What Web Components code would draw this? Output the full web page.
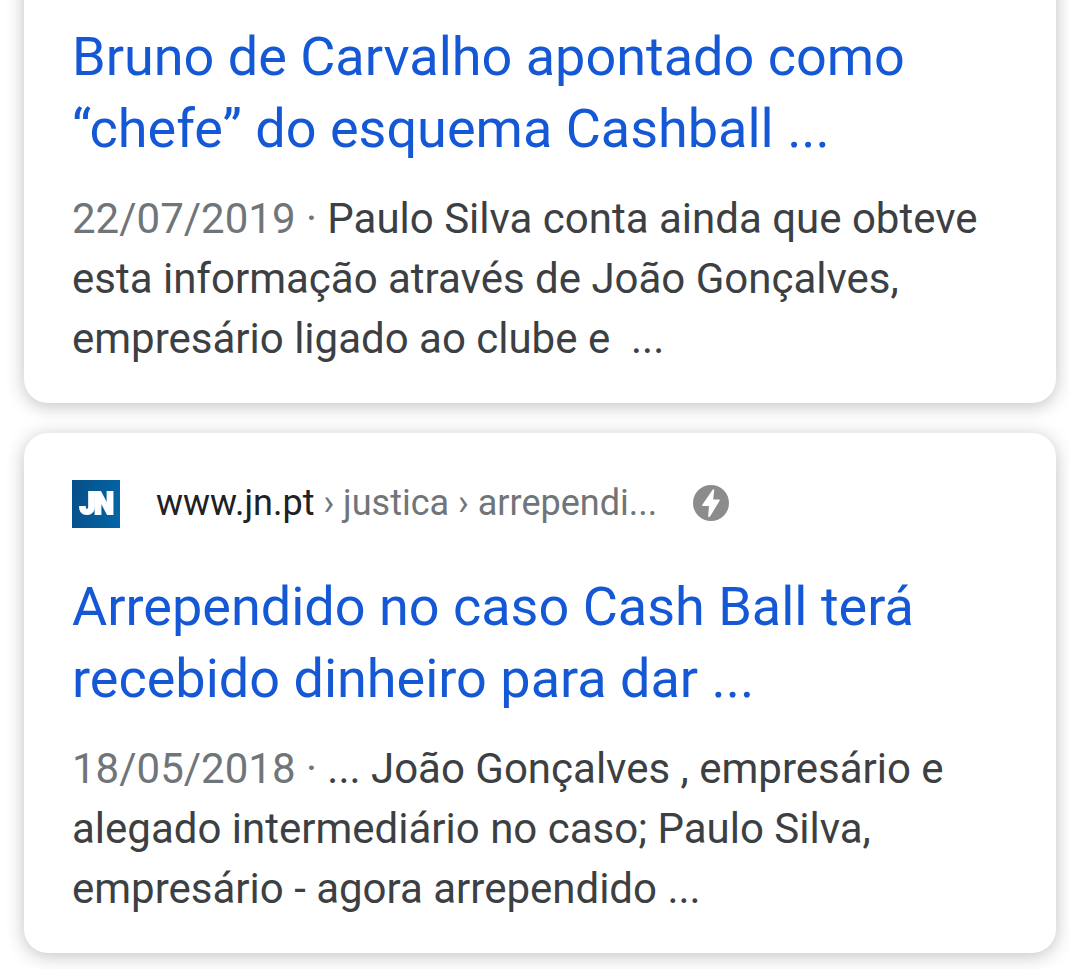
<!DOCTYPE html>
<html lang="pt">
<head>
<meta charset="utf-8">
<title>Resultados</title>
<style>
  html, body { margin: 0; height: 969px; overflow: hidden; background: #fff; }
  body { font-family: Roboto, "Liberation Sans", sans-serif; }
</style>
</head>
<body>
<result-list>
  <result-card class="first">
    <result-title>Bruno de Carvalho apontado como<br>“chefe” do esquema Cashball ...</result-title>
    <result-snippet date="22/07/2019">Paulo Silva conta ainda que obteve<br>esta informação através de João Gonçalves,<br>empresário ligado ao clube e &nbsp;...</result-snippet>
  </result-card>
  <result-card>
    <result-source slot="source" host="www.jn.pt" path=" › justica › arrependi..."></result-source>
    <result-title>Arrependido no caso Cash Ball terá<br>recebido dinheiro para dar ...</result-title>
    <result-snippet date="18/05/2018">... João Gonçalves , empresário e<br>alegado intermediário no caso; Paulo Silva,<br>empresário - agora arrependido ...</result-snippet>
  </result-card>
</result-list>

<script>
/* Attaches an open shadow root filled from a template. */
function define(name, html, setup) {
  const template = document.createElement('template');
  template.innerHTML = html;
  customElements.define(name, class extends HTMLElement {
    constructor() {
      super();
      this.attachShadow({ mode: 'open' }).appendChild(template.content.cloneNode(true));
    }
    connectedCallback() {
      if (setup) setup(this, this.shadowRoot);
    }
  });
}

define('result-list', `
  <style>
    :host {
      display: flex;
      flex-direction: column;
      gap: 30px;
      height: 969px;
      padding: 0 13px 0 24px;
      box-sizing: border-box;
      overflow: hidden;
    }
    ::slotted(result-card) { flex: none; }
    ::slotted(.first) { margin-top: -117px; }
  </style>
  <slot></slot>
`);

define('result-card', `
  <style>
    :host {
      display: flex;
      flex-direction: column;
      height: 520px;
      padding: 0 48px;
      box-sizing: border-box;
      border-radius: 24px;
      background: #fff;
      box-shadow: 0 3px 18px rgba(32, 33, 36, .28);
    }
    .source { height: 138px; flex: none; }
  </style>
  <div class="source"><slot name="source"></slot></div>
  <slot></slot>
`);

define('result-source', `
  <style>
    :host { display: flex; align-items: center; height: 48px; padding-top: 47px; white-space: pre; }
    .favicon { width: 48px; height: 48px; flex: none; margin-right: 36px; }
    .url { font-size: 36px; line-height: 48px; margin-bottom: 2px; color: #70757a; }
    .host { color: #202124; }
    .amp { width: 36px; height: 36px; flex: none; margin: 0 0 2px 36px; }
  </style>
  <jn-favicon class="favicon"></jn-favicon>
  <span class="url"><span class="host"></span><span class="path"></span></span>
  <svg class="amp" viewBox="0 0 36 36">
    <circle cx="18" cy="18" r="18" fill="#8c8c8c"/>
    <path d="M19.8 4.6Q21.4 3.6 21.2 5.2L20.2 14.4H26Q27.3 14.6 26.6 15.8L17.2 31.2Q15.2 33 15.2 31L16 20.9H10Q8.6 20.7 9.5 19.4Z" fill="#fff"/>
  </svg>
`, (host, root) => {
  root.querySelector('.host').textContent = host.getAttribute('host');
  root.querySelector('.path').textContent = host.getAttribute('path');
});

define('jn-favicon', `
  <style>
    :host {
      display: flex;
      align-items: center;
      justify-content: center;
      background: linear-gradient(100deg, #064f88, #0566a6);
      color: #fff;
      font: 900 31px/48px Roboto, sans-serif;
    }
    span {
      -webkit-text-stroke: 2px #fff;
      letter-spacing: -1.5px;
      transform: scale(.92, 1.02);
      filter: blur(.6px);
    }
  </style>
  <span>JN</span>
`);

define('result-title', `
  <style>
    :host { display: block; font-size: 54px; line-height: 72px; color: #1558d6; white-space: nowrap; }
  </style>
  <slot></slot>
`);

define('result-snippet', `
  <style>
    :host { display: block; margin-top: 24px; font-size: 42px; line-height: 60px; color: #3c4043; white-space: nowrap; }
    .date { color: #70757a; }
  </style>
  <span class="date"></span><slot></slot>
`, (host, root) => {
  root.querySelector('.date').textContent = host.getAttribute('date') + ' · ';
});
</script>
</body>
</html>
